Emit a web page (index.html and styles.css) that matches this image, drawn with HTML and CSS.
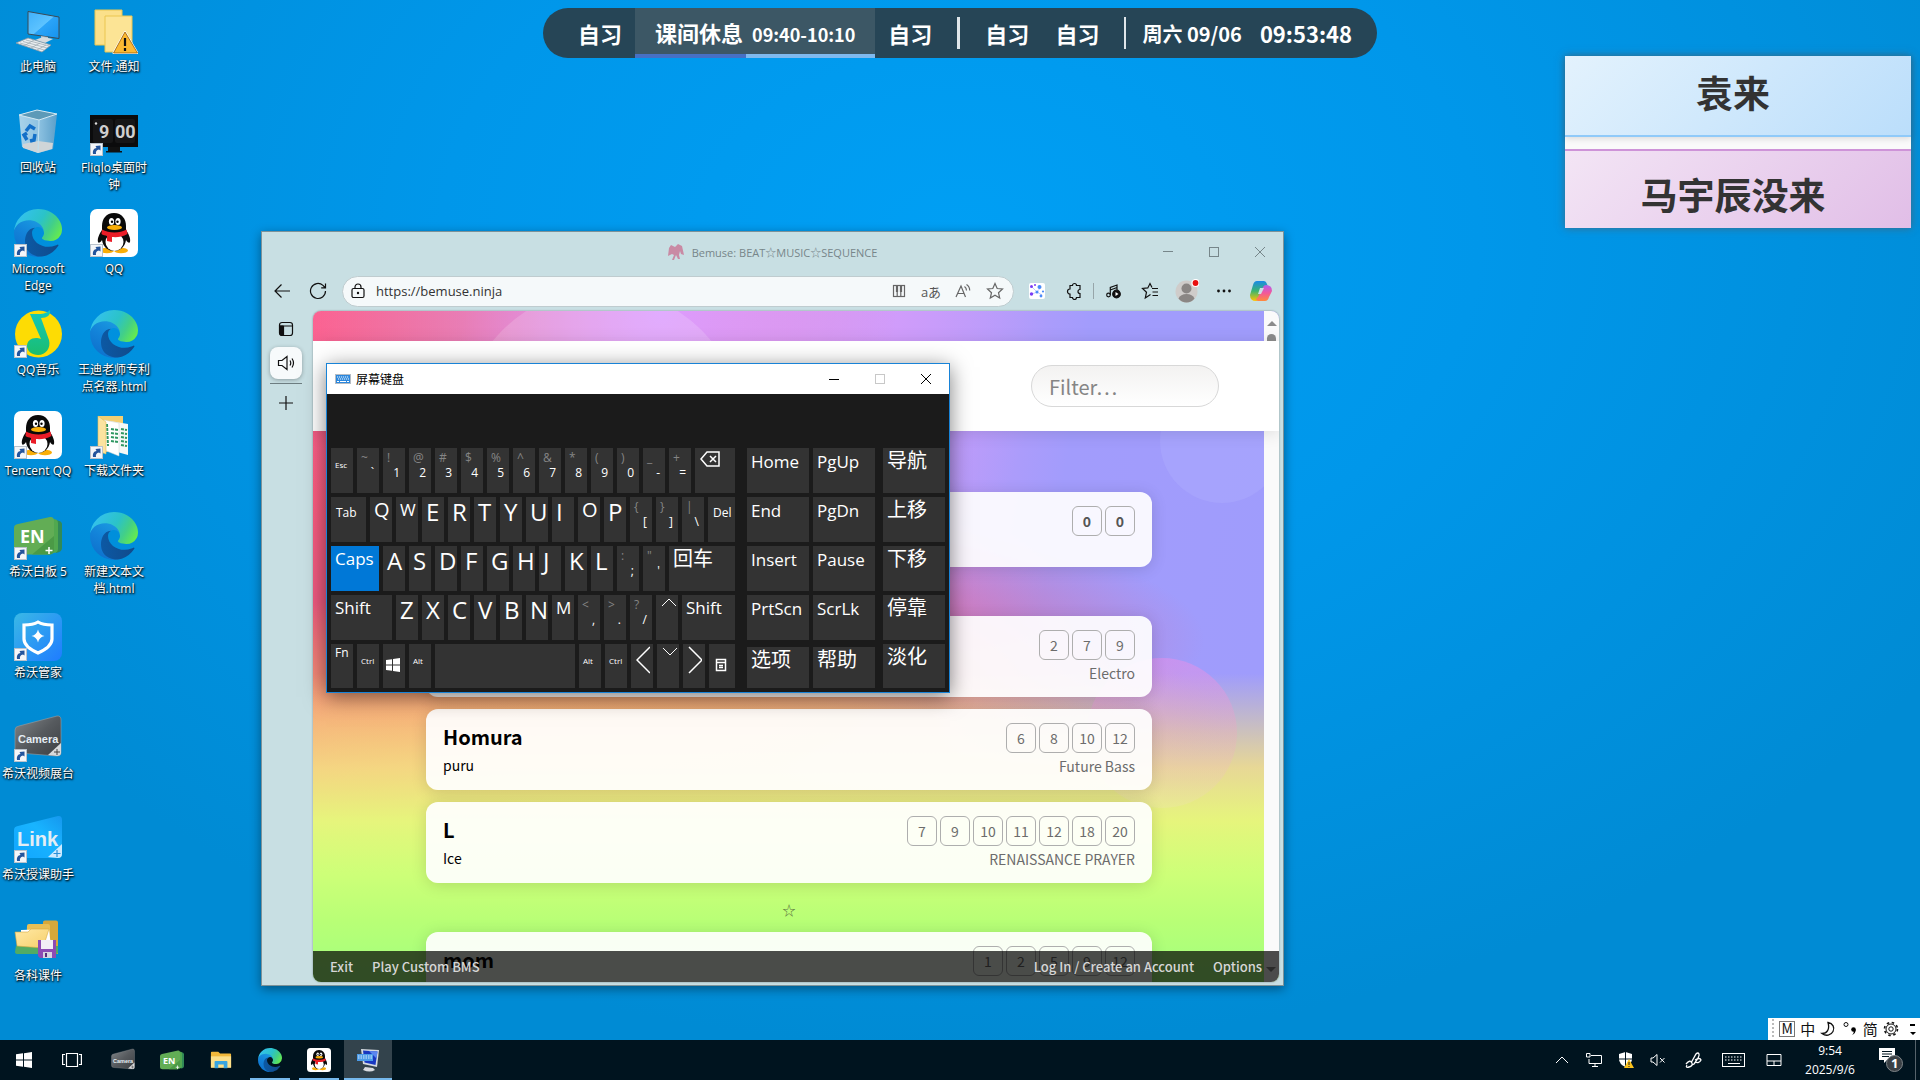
FILE: index.html
```html
<!DOCTYPE html>
<html lang="zh-CN">
<head>
<meta charset="utf-8">
<title>桌面</title>
<link rel="stylesheet" href="styles.css">
</head>
<body>
<svg class="defs" aria-hidden="true">
  <defs>
    <linearGradient id="edgeDark" x1="0" x2="1"><stop offset="0" stop-color="#0c59a4"/><stop offset="1" stop-color="#114a8b"/></linearGradient>
    <linearGradient id="edgeMid" x1=".8" y1="0" x2=".3" y2="1"><stop offset="0" stop-color="#1b9de2"/><stop offset=".5" stop-color="#1383d9"/><stop offset="1" stop-color="#0d70cc"/></linearGradient>
    <linearGradient id="edgeTop" x1="0" y1=".3" x2="1" y2=".7"><stop offset="0" stop-color="#35c1f1"/><stop offset=".5" stop-color="#2bc3c8"/><stop offset=".75" stop-color="#42cf88"/><stop offset="1" stop-color="#66eb4e"/></linearGradient>
    <linearGradient id="screen" x1="0" y1="0" x2="1" y2="1"><stop offset="0" stop-color="#3fb0fb"/><stop offset=".5" stop-color="#5dc3ff"/><stop offset=".52" stop-color="#2ba4f8"/><stop offset="1" stop-color="#1593ee"/></linearGradient>
    <linearGradient id="folder" x1="0" y1="0" x2="1" y2="1"><stop offset="0" stop-color="#ffe9a6"/><stop offset="1" stop-color="#f6cf6a"/></linearGradient>
    <linearGradient id="note" x1="0" y1="0" x2="0" y2="1"><stop offset="0" stop-color="#12c8bd"/><stop offset="1" stop-color="#1bbd6e"/></linearGradient>
    <linearGradient id="shield" x1="0" y1="0" x2="1" y2="1"><stop offset="0" stop-color="#3ab9e6"/><stop offset="1" stop-color="#1f7cff"/></linearGradient>
    <linearGradient id="camera" x1="0" y1="0" x2="1" y2="1"><stop offset="0" stop-color="#83878a"/><stop offset=".5" stop-color="#565a5e"/><stop offset="1" stop-color="#3c3f43"/></linearGradient>
    <linearGradient id="linkbg" x1="0" y1="1" x2="1" y2="0"><stop offset="0" stop-color="#12a5ff"/><stop offset=".6" stop-color="#18b4ff"/><stop offset="1" stop-color="#1697ee"/></linearGradient>
    <linearGradient id="copA" x1="0" y1="0" x2="0" y2="1"><stop offset="0" stop-color="#1a8ae8"/><stop offset=".5" stop-color="#3bb56e"/><stop offset="1" stop-color="#ffc400"/></linearGradient>
    <linearGradient id="copB" x1="0" y1="0" x2="0" y2="1"><stop offset="0" stop-color="#b45cf0"/><stop offset=".5" stop-color="#f2589a"/><stop offset="1" stop-color="#ff8a3c"/></linearGradient>
    <linearGradient id="bin" x1="0" y1="0" x2="1" y2="0"><stop offset="0" stop-color="#a9d3ea"/><stop offset=".5" stop-color="#8fc3e2"/><stop offset="1" stop-color="#5c9fc9"/></linearGradient>
  </defs>
  <symbol id="i-edge" viewBox="0 0 256 256">
    <path fill="url(#edgeMid)" d="M105.73 241.42A79.2 79.2 0 0 1 83 220.08a80.72 80.72 0 0 1 29.53-120c3.12-1.47 8.45-4.13 15.54-4a32.35 32.35 0 0 1 25.69 13 31.88 31.88 0 0 1 6.36 18.66c0-.21 24.46-79.6-80-79.6-43.9 0-80 41.66-80 78.21a130.15 130.15 0 0 0 12.11 56 128 128 0 0 0 156.38 67.11 75.55 75.55 0 0 1-62.78-8Z"/>
    <path fill="url(#edgeDark)" transform="translate(-4.63 -4.92)" d="M235.68 195.46a93.73 93.73 0 0 1-10.54 4.71 101.87 101.87 0 0 1-35.9 6.46c-47.32 0-88.54-32.55-88.54-74.32A31.48 31.48 0 0 1 117.13 105c-42.8 1.8-53.8 46.4-53.8 72.53 0 73.88 68.09 81.37 82.76 81.37 7.91 0 19.84-2.3 27-4.56l1.31-.44a128.34 128.34 0 0 0 66.6-52.8 4 4 0 0 0-5.32-5.64Z"/>
    <path fill="url(#edgeTop)" d="M152.33 148.86c-.81 1-3.3 2.5-3.3 5.66 0 2.61 1.7 5.12 4.72 7.23 14.38 10 41.49 8.68 41.56 8.68a59.56 59.56 0 0 0 30.27-8.35 61.38 61.38 0 0 0 30.43-52.88c.26-22.41-8-37.31-11.34-43.91C223.46 23.84 177.72 0 128 0A128 128 0 0 0 0 126.2c.48-36.54 36.8-66.05 80-66.05 3.5 0 23.46.34 42 10.07 16.34 8.58 24.9 18.94 30.85 29.21 6.18 10.67 7.28 24.15 7.28 29.52s-2.74 13.33-7.8 19.91Z"/>
  </symbol>
  <symbol id="i-qq" viewBox="0 0 48 48">
    <rect width="48" height="48" rx="7" fill="#fff"/>
    <ellipse cx="17" cy="41.500" rx="7" ry="2.800" fill="#f9ae08"/><ellipse cx="31" cy="41.500" rx="7" ry="2.800" fill="#f9ae08"/>
    <path d="M24 4c-8 0-12 6-12 13v4c-2 3-5 8-4 12 .5 1.500 2.500.5 4-2 1 7 6 11 12 11s11-4 12-11c1.500 2.500 3.500 3.500 4 2 1-4-2-9-4-12v-4c0-7-4-13-12-13z" fill="#0a0a0a"/>
    <ellipse cx="24.500" cy="33" rx="9" ry="9" fill="#fff"/>
    <ellipse cx="21.500" cy="12.500" rx="2.600" ry="3.600" fill="#fff"/><ellipse cx="28" cy="12.500" rx="2.600" ry="3.600" fill="#fff"/>
    <circle cx="22" cy="12.800" r="1.200"/><circle cx="27.500" cy="12.800" r="1.200"/>
    <ellipse cx="24.500" cy="18.500" rx="7.500" ry="2.400" fill="#f9ae08"/>
    <path d="M12 20.500c7 4 18 4 24.500 0l1 4.500c-5 3-11 3.500-15.500 3v5l-5-1v-5c-2-.5-4-1-5.500-2z" fill="#ea1c27"/>
  </symbol>
  <symbol id="i-arrow" viewBox="0 0 13 13">
    <rect x=".5" y=".5" width="12" height="12" fill="#f4f6f9" stroke="#b9c2cc"/>
    <path d="M3 11c-.5-4 1-5.500 3.500-6L5.500 3l5-.5v5L9 6.500C6.500 7 5.500 8.500 6 11z" fill="#24549c"/>
  </symbol>
  <symbol id="i-en" viewBox="0 0 48 48">
    <path d="M42 8q6 1 6 4v24q0 4-6 5z" fill="#318a56"/><path d="M39 7q5 0 5 4v26q0 4-5 4z" fill="#51a84f"/>
    <path d="M4 12 36 5q4-.5 4 4v29q0 4-4 4.500H5q-5 0-5-4V16q0-3.500 4-4z" fill="#62ad55"/>
    <path d="M18 42.500 40 24v14q0 4-4 4.500z" fill="#4b9a46"/>
    <path d="M35 35v7M31.500 38.500h7" stroke="#fff" stroke-width="1.500"/>
  </symbol>
  <symbol id="i-camera" viewBox="0 0 48 48">
    <path d="M5 12 43 2q4-.5 4 4v33q0 3-4 3L5 39q-4 0-4-4V16q0-3.500 4-4z" fill="url(#camera)" stroke="#9a9da0" stroke-width=".6"/>
    <path d="M34 41 47 29v10q0 3-4 3z" fill="#d8dadc"/><path d="M43 35v6M40 38h6" stroke="#444" stroke-width="1"/>
  </symbol>
  <symbol id="i-folder" viewBox="0 0 24 20">
    <path d="M1 2q0-1 1-1h7l2 2h11q1 0 1 1v14H1z" fill="#f3b93b"/><path d="M1 6h22v12.500H1z" fill="#fde08a"/>
    <path d="M5 19v-7q0-1 1-1h12q1 0 1 1v7h-4v-4H9v4z" fill="#38a5e0"/>
  </symbol>
</svg>

<main class="desktop">
  <ul class="icons">
    <li><button class="icon"><span class="pic"><svg viewBox="0 0 48 48"><path d="M14 4.500 45 10v21.500L14 27z" fill="url(#screen)" stroke="#3b4a55" stroke-width="1"/><path d="M27 29l7 1v4l-7-1z" fill="#b7c0c6"/><path d="M21 33l8-3 10 2-8 4z" fill="#d5dbdf"/><path d="M2 36l12-5 23 7-9 7z" fill="#e9edf0" stroke="#8b98a2" stroke-width=".8"/><path d="M6 36l24 7M9 34.500l24 6.500M12 33l23 6M10 39l10-6M17 41l9-5M23 43l9-5" stroke="#9aa6ae" stroke-width=".7"/></svg></span><span class="name">此电脑</span></button></li>
    <li><button class="icon"><span class="pic"><svg viewBox="0 0 48 48"><path d="M5 7 23 2l20 4-4 35-15 4-16-6z" fill="url(#bin)"/><path d="M5 7 23 2l20 4-18 6z" fill="#5d9ab8" stroke="#d4e9f3" stroke-width="1"/><path d="M9 36l15-3 15 2-1 6-14 4-15-5z" fill="#cfd5d8"/><path d="M25 12l-1 33" stroke="#bfe0f0"/><g fill="none" stroke="#1370c8" stroke-width="3.500"><path d="M12 23l4-5 5 3"/><path d="M21 26l-1 6-4 1"/><path d="M13 32l-3-5 3-2"/></g></svg></span><span class="name">回收站</span></button></li>
    <li><button class="icon"><span class="pic"><svg><use href="#i-edge"/></svg><svg class="lnk"><use href="#i-arrow"/></svg></span><span class="name">Microsoft Edge</span></button></li>
    <li><button class="icon"><span class="pic"><svg viewBox="0 0 48 48"><circle cx="24.500" cy="24" r="23.500" fill="#fddc04"/><path d="M16 4c8 0 15 1 20-4 1 5-3 8-9 8l8 22c2 8-3 15-11 15-6 0-11-4-11-9s4-8 9-8c2 0 3 0 5 1z" fill="url(#note)"/></svg><svg class="lnk"><use href="#i-arrow"/></svg></span><span class="name">QQ音乐</span></button></li>
    <li><button class="icon"><span class="pic"><svg><use href="#i-qq"/></svg><svg class="lnk"><use href="#i-arrow"/></svg></span><span class="name">Tencent QQ</span></button></li>
    <li><button class="icon"><span class="pic"><svg viewBox="0 0 48 48"><use href="#i-en"/><text x="6" y="31" font-size="18" class="logo-text">EN</text></svg><svg class="lnk"><use href="#i-arrow"/></svg></span><span class="name">希沃白板 5</span></button></li>
    <li><button class="icon"><span class="pic"><svg viewBox="0 0 48 48"><rect width="48" height="48" rx="8" fill="url(#shield)"/><path d="M24 9c5 3 9 3 14 3v14c0 6-5 10-14 14-9-4-14-8-14-14V12c5 0 9 0 14-3z" fill="none" stroke="#fff" stroke-width="3.200"/><path d="M24 16.500q1.200 5.300 6.500 6.500-5.300 1.200-6.500 6.500-1.200-5.300-6.500-6.500 5.300-1.200 6.500-6.500z" fill="#fff"/></svg><svg class="lnk"><use href="#i-arrow"/></svg></span><span class="name">希沃管家</span></button></li>
    <li><button class="icon"><span class="pic"><svg viewBox="0 0 48 48"><use href="#i-camera"/><text x="4" y="29" font-size="11" class="logo-thin">Camera</text></svg><svg class="lnk"><use href="#i-arrow"/></svg></span><span class="name">希沃视频展台</span></button></li>
    <li><button class="icon"><span class="pic"><svg viewBox="0 0 48 48"><path d="M4 11 44 1q4-.5 4 4v33q0 5-4 5H4q-4 0-4-4V15q0-3.500 4-4z" fill="url(#linkbg)"/><path d="M34 42 48 29v10q0 4-4 4z" fill="#cdeaff"/><path d="M43 35v7M39.500 38.500h7" stroke="#2b8fd8" stroke-width="1.200"/><text x="3" y="31" font-size="20" class="logo-thin">Link</text></svg><svg class="lnk"><use href="#i-arrow"/></svg></span><span class="name">希沃授课助手</span></button></li>
    <li><button class="icon"><span class="pic"><svg viewBox="0 0 48 48"><path d="M29 6q0-1.500 2-1.500h11q2 0 2 2V38H28z" fill="#d7a83a"/><path d="M13 10q0-2 2-2h19q2 0 2 2v27H12z" fill="#e8bf55"/><path d="M7 14l28-1 2 18H7z" fill="#fff"/><path d="M2 30h42v6q0 2-3 2H4q-3 0-3-2z" fill="#52ab63"/><path d="M1 16h13l3-3h18l-6 19L3 30z" fill="url(#folder)" stroke="#d6a93f" stroke-width=".6"/><path d="M24 24h18v18H26l-2-2z" fill="#8d4bb4"/><path d="M27 24h12v9H27z" fill="#f2eef6"/><path d="M29 36h9v6h-9z" fill="#d9d3e0"/><path d="M31 37h2v4h-2z" fill="#5b2f7c"/></svg></span><span class="name">各科课件</span></button></li>
    <li><button class="icon"><span class="pic"><svg viewBox="0 0 48 48"><path d="M5 3h27v35H5z" fill="#fbe08a" stroke="#eac650"/><path d="M15 9h27v36H15z" fill="#fce495" stroke="#eac650"/><path d="M35 25 23.500 46h24z" fill="#f8b32c" stroke="#fff" stroke-width="2" stroke-linejoin="round"/><path d="M35 25 23.500 46h24z" fill="#fbb933" stroke="#9a5b00" stroke-width=".8" stroke-linejoin="round"/><path d="M35 31v8M35 41v3" stroke="#111" stroke-width="2.200"/></svg></span><span class="name">文件,通知</span></button></li>
    <li><button class="icon"><span class="pic"><svg viewBox="0 0 48 48"><path d="M0 7h48v32H0z" fill="#0b0b0c"/><path d="M18 39h12v4H18zM16 43h16v1.500H16z" fill="#111"/><rect x="3" y="11" width="20" height="24" rx="2" fill="#161617"/><rect x="25" y="11" width="20" height="24" rx="2" fill="#161617"/><text x="9" y="30" font-size="18" class="logo-clock">9</text><text x="25" y="30" font-size="18" class="logo-clock">00</text><circle cx="6" cy="15.500" r="1.200" fill="#ddd"/></svg><svg class="lnk"><use href="#i-arrow"/></svg></span><span class="name">Fliqlo桌面时钟</span></button></li>
    <li><button class="icon"><span class="pic"><svg><use href="#i-qq"/></svg><svg class="lnk"><use href="#i-arrow"/></svg></span><span class="name">QQ</span></button></li>
    <li><button class="icon"><span class="pic"><svg><use href="#i-edge"/></svg></span><span class="name">王迪老师专利点名器.html</span></button></li>
    <li><button class="icon"><span class="pic"><svg viewBox="0 0 48 48"><path d="M8 5h25v30l-22 8-3-3z" fill="#f3cf72"/><path d="M20 10l18 3v31l-18-5z" fill="#f4f8f6"/><path d="M14 9l15 3v33l-15-6z" fill="#fff" stroke="#ccd4d0" stroke-width=".5"/><path d="M17 13l1 22M21 18l7 1M21 22l7 1M21 26l7 1M21 30l7 1M31 18l6 1M31 22l6 1M31 26l6 1M31 30l6 1M31 34l6 1" stroke="#2f9762" stroke-width="2" stroke-dasharray="3 1"/><path d="M8 5l8 6v32l-8-3z" fill="#fbe3a0" stroke="#e4bd57" stroke-width=".6"/></svg><svg class="lnk"><use href="#i-arrow"/></svg></span><span class="name">下载文件夹</span></button></li>
    <li><button class="icon"><span class="pic"><svg><use href="#i-edge"/></svg></span><span class="name">新建文本文档.html</span></button></li>
  </ul>

  <section class="schedule" aria-label="课程表">
    <span class="lesson">自习</span>
    <span class="lesson current">课间休息 <small>09:40-10:10</small><i class="elapsed"></i></span>
    <span class="lesson">自习</span>
    <i class="bar"></i>
    <span class="lesson">自习</span>
    <span class="lesson">自习</span>
    <i class="bar thin"></i>
    <span class="date">周六 09/06</span>
    <time class="now">09:53:48</time>
  </section>

  <section class="notes" aria-label="便签">
    <p class="note blue">袁来</p>
    <p class="note pink">马宇辰没来</p>
  </section>

  <section class="browser" aria-label="Bemuse">
    <header class="titlebar">
      <h1 class="title"><svg class="i16" viewBox="0 0 16 16"><path d="M3 1l4 2 3-3 4 2 2 9-3-1-1-3-1 4 1 4h-2l-2-4-2 5H4l2-5-2-1-2 1-2 1 1-8z" fill="#c98aa4"/></svg>Bemuse: BEAT☆MUSIC☆SEQUENCE</h1>
      <div class="controls">
        <button aria-label="最小化"><svg class="i12" viewBox="0 0 12 12"><path d="M1 5.500h10"/></svg></button>
        <button aria-label="最大化"><svg class="i12" viewBox="0 0 12 12"><rect x="1.500" y="1.500" width="9" height="9"/></svg></button>
        <button aria-label="关闭"><svg class="i12" viewBox="0 0 12 12"><path d="M1 1l10 10M11 1 1 11"/></svg></button>
      </div>
    </header>
    <div class="toolbar">
      <button class="tool" aria-label="返回"><svg class="i18" viewBox="0 0 18 18"><path d="M17 9H2M8.500 2.500 2 9l6.500 6.500"/></svg></button>
      <button class="tool" aria-label="刷新"><svg class="i18" viewBox="0 0 18 18"><path d="M16.500 9A7.500 7.500 0 1 1 14 3.400L16 5.500M16.500 1.500v4.300h-4.300"/></svg></button>
      <div class="address">
        <svg class="i16" viewBox="0 0 16 16"><rect x="2" y="5.500" width="12" height="9" rx="1.500"/><path d="M5 5.500V4a3 3 0 0 1 6 0v1.500"/><circle cx="8" cy="10" r=".6" fill="#333"/></svg>
        <input type="text" aria-label="地址" value="https://bemuse.ninja">
        <button class="tool s" aria-label="钢琴"><svg class="i16" viewBox="0 0 16 16"><rect x="2.500" y="2.500" width="11" height="11"/><path d="M6.200 9v4.500M9.800 9v4.500"/><path d="M6 3v6M10 3v6" stroke-width="2.200"/></svg></button>
        <button class="tool s" aria-label="翻译"><span class="glyph">aあ</span></button>
        <button class="tool s" aria-label="朗读"><svg class="i16" viewBox="0 0 16 16"><path d="M1 14 6 3l4.500 11M2.700 10.500h6.400M9.500 3.500q2 1.500 2 4M11.500 1.500q3.200 2 3.200 6"/></svg></button>
        <button class="tool s" aria-label="收藏"><svg class="i18" viewBox="0 0 18 18"><path d="m9 1.500 2.200 5 5.300.5-4 3.700 1.200 5.300L9 13.300 4.300 16l1.200-5.300-4-3.700 5.300-.5z"/></svg></button>
      </div>
      <div class="actions">
        <button class="tool" aria-label="扩展图"><svg class="i16" viewBox="0 0 16 16" stroke="none"><rect width="16" height="16" rx="2" fill="#fff"/><path d="M3 4l5 5 4-5M3 11l5-2 5 3" stroke="#a8b4ff" fill="none" stroke-width=".7"/><g fill="#7a3cf5"><circle cx="2.500" cy="3.500" r="1.500"/><circle cx="2.500" cy="11" r="1.700"/><circle cx="6" cy="2" r="1"/></g><g fill="#4a8bf8"><circle cx="10.500" cy="4" r="2"/><circle cx="8" cy="9" r="1.500"/><circle cx="12" cy="13" r="1.400"/><circle cx="14" cy="8.500" r="1.100"/></g></svg></button>
        <button class="tool" aria-label="扩展"><svg class="i18" viewBox="0 0 18 18"><path d="M5 3.500h2.500a2 2 0 0 1 4 0H15v4a2 2 0 0 0 0 4v4h-3.500a2 2 0 0 1-4 0H5v-3.500a2.500 2.500 0 0 1 0-5z"/></svg></button>
        <i class="sep"></i>
        <button class="tool" aria-label="媒体"><svg class="i16" viewBox="0 0 16 16"><circle cx="3.500" cy="12" r="1.800"/><path d="M5.300 12V4.500L12 2v5M5.300 7 12 4.500"/><circle cx="11.500" cy="11" r="3.800" fill="#111"/><path d="m10.500 9 3 2-3 2z" fill="#fff" stroke="none"/></svg></button>
        <button class="tool" aria-label="收藏夹"><svg class="i18" viewBox="0 0 18 18"><path d="M9.500 12.500 4.300 16l1.200-5.800L1.500 6.500l5.300-.6L9 1.500l2 4M11 6.500h6M11.500 10h5.500M11.500 13.500h5.500"/></svg></button>
        <button class="tool" aria-label="个人资料"><svg class="i24" viewBox="0 0 24 24" stroke="none"><circle cx="11.500" cy="12.500" r="11" fill="#cfccca"/><circle cx="11.500" cy="9.500" r="5" fill="#8a8684"/><path d="M3.500 19.500q2-4.500 8-4.500t8 4.500q-3 4-8 4t-8-4z" fill="#8a8684"/><circle cx="20.500" cy="4" r="3.500" fill="#e81010" stroke="#fff"/></svg></button>
        <button class="tool" aria-label="设置"><svg class="i16" viewBox="0 0 16 16" stroke="none"><g fill="#111"><circle cx="2.500" cy="8" r="1.400"/><circle cx="8" cy="8" r="1.400"/><circle cx="13.500" cy="8" r="1.400"/></g></svg></button>
        <button class="tool" aria-label="Copilot"><svg class="i24" viewBox="0 0 24 24" stroke="none"><path d="M8 2h7q2 0 3 3l1 3h-4l-5 12q-1 2-3 2-6 0-6-6L4 6q1-4 4-4z" fill="url(#copA)"/><path d="M16 22H9q-2 0-2-2l2-2 5-10q1-2 3-2 6 0 6 6l-3 6q-1 4-4 4z" fill="url(#copB)"/><path d="M11 9h4l-3 6H9z" fill="#c9e0e4"/></svg></button>
      </div>
    </div>
    <div class="body">
      <nav class="tabs" aria-label="标签页">
        <button class="tab" aria-label="标签操作"><svg class="i16" viewBox="0 0 16 16"><rect x="1.500" y="1.500" width="13" height="13" rx="2.500"/><path d="M1.500 5h13M5.500 5v9.500"/><path d="M2 5h3v9H3L2 13z" fill="#111"/></svg></button>
        <button class="tab on" aria-label="Bemuse"><svg class="i18" viewBox="0 0 18 18"><path d="M1.500 6.500v5h3.500l5 4v-13l-5 4zM13 6.500q1.500 2.500 0 5M15 4.500q3 4.500 0 9"/></svg></button>
        <button class="tab" aria-label="新建标签页"><svg class="i16" viewBox="0 0 16 16"><path d="M8 1v14M1 8h14"/></svg></button>
      </nav>
      <div class="page" lang="en">
        <i class="bubble b1"></i><i class="bubble b2"></i><i class="bubble b3"></i>
        <div class="scroll"><i class="up"></i><i class="thumb"></i></div>
        <div class="filterbar"><input type="text" placeholder="Filter…" aria-label="Filter"></div>
        <ul class="songs">
          <li class="song short"><div class="info"></div><div class="meta"><div class="levels"><b>0</b><b>0</b></div></div></li>
          <li class="star">☆</li>
          <li class="song"><div class="info"></div><div class="meta"><div class="levels"><span>2</span><span>7</span><span>9</span></div><p>Electro</p></div></li>
          <li class="song"><div class="info"><h2>Homura</h2><p>puru</p></div><div class="meta"><div class="levels"><span>6</span><span>8</span><span>10</span><span>12</span></div><p>Future Bass</p></div></li>
          <li class="song"><div class="info"><h2>L</h2><p>Ice</p></div><div class="meta"><div class="levels"><span>7</span><span>9</span><span>10</span><span>11</span><span>12</span><span>18</span><span>20</span></div><p>RENAISSANCE PRAYER</p></div></li>
          <li class="star">☆</li>
          <li class="song"><div class="info"><h2>mom</h2></div><div class="meta"><div class="levels"><span>1</span><span>2</span><span>5</span><span>9</span><span>12</span></div></div></li>
        </ul>
        <footer class="menu">
          <a href="#">Exit</a><a href="#">Play Custom BMS</a>
          <a href="#" class="push">Log In / Create an Account</a><a href="#">Options</a><i class="down"></i>
        </footer>
      </div>
    </div>
  </section>

  <section class="osk" aria-label="屏幕键盘">
    <header class="osk-title">
      <svg viewBox="0 0 16 10"><rect x=".5" y=".5" width="15" height="9" fill="#2b87dd" stroke="#b5bcc4"/><path d="M2 3h12M3 5h11" stroke="#fff" stroke-dasharray="1.200 .8"/><path d="M2 7.500h2M5 7.500h6M12 7.500h2" stroke="#fff"/></svg>
      <h2>屏幕键盘</h2>
      <div class="controls">
        <button aria-label="最小化"><svg class="i12" viewBox="0 0 12 12"><path d="M1 6.500h10"/></svg></button>
        <button aria-label="最大化" disabled><svg class="i12" viewBox="0 0 12 12"><rect x="1.500" y="1.500" width="9" height="9"/></svg></button>
        <button aria-label="关闭"><svg class="i12" viewBox="0 0 12 12"><path d="M1 1l10 10M11 1 1 11"/></svg></button>
      </div>
    </header>
    <div class="keys">
      <div class="block main">
        <div class="row">
          <button class="k xs">Esc</button><button class="k two"><i>~</i><b>`</b></button><button class="k two"><i>!</i><b>1</b></button><button class="k two"><i>@</i><b>2</b></button><button class="k two"><i>#</i><b>3</b></button><button class="k two"><i>$</i><b>4</b></button><button class="k two"><i>%</i><b>5</b></button><button class="k two"><i>^</i><b>6</b></button><button class="k two"><i>&amp;</i><b>7</b></button><button class="k two"><i>*</i><b>8</b></button><button class="k two"><i>(</i><b>9</b></button><button class="k two"><i>)</i><b>0</b></button><button class="k two"><i>_</i><b>-</b></button><button class="k two"><i>+</i><b>=</b></button><button class="k w40" aria-label="退格"><svg width="20" height="18" viewBox="0 0 20 18"><path d="M7 2h12v14H7L1 9zM10 6l6 6M16 6l-6 6" stroke-width="1.500"/></svg></button>
        </div>
        <div class="row">
          <button class="k s w35">Tab</button><button class="k l">Q</button><button class="k m">W</button><button class="k">E</button><button class="k">R</button><button class="k">T</button><button class="k">Y</button><button class="k">U</button><button class="k">I</button><button class="k l">O</button><button class="k">P</button><button class="k two"><i>{</i><b>[</b></button><button class="k two"><i>}</i><b>]</b></button><button class="k two"><i>|</i><b>\</b></button><button class="k s w27">Del</button>
        </div>
        <div class="row">
          <button class="k m w48 on">Caps</button><button class="k">A</button><button class="k">S</button><button class="k">D</button><button class="k">F</button><button class="k">G</button><button class="k">H</button><button class="k">J</button><button class="k">K</button><button class="k">L</button><button class="k two"><i>:</i><b>;</b></button><button class="k two"><i>"</i><b>'</b></button><button class="k l w66">回车</button>
        </div>
        <div class="row">
          <button class="k m w61">Shift</button><button class="k">Z</button><button class="k">X</button><button class="k">C</button><button class="k">V</button><button class="k">B</button><button class="k">N</button><button class="k m">M</button><button class="k two"><i>&lt;</i><b>,</b></button><button class="k two"><i>&gt;</i><b>.</b></button><button class="k two"><i>?</i><b>/</b></button><button class="k" aria-label="上"><svg width="16" height="12" viewBox="0 0 16 12"><path d="M1 9l7-7 7 7"/></svg></button><button class="k m w53">Shift</button>
        </div>
        <div class="row">
          <button class="k fn">Fn</button><button class="k xs">Ctrl</button><button class="k low" aria-label="Windows"><svg width="14" height="14" viewBox="0 0 14 14" stroke="none" fill="#fff"><path d="M0 2l6-.8v5.300H0zM7 1l7-1v6.500H7zM0 7.500h6v5.300L0 12zM7 7.500h7V14l-7-1z"/></svg></button><button class="k xs">Alt</button><button class="k w140" aria-label="空格"></button><button class="k xs">Alt</button><button class="k xs">Ctrl</button><button class="k" aria-label="左"><svg width="14" height="28" viewBox="0 0 14 28"><path d="M14 1 1 14l13 13" stroke-width="1.500"/></svg></button><button class="k" aria-label="下"><svg width="16" height="12" viewBox="0 0 16 12"><path d="M1 2l7 7 7-7"/></svg></button><button class="k" aria-label="右"><svg width="14" height="28" viewBox="0 0 14 28"><path d="M1 1l13 13L1 27" stroke-width="1.500"/></svg></button><button class="k low w26" aria-label="菜单"><svg width="12" height="14" viewBox="0 0 12 14"><path d="M1.500 1.500h9v11h-9zM1.500 4.500h9M4 7.500h4M4 9.500h4" stroke-width="1.500"/></svg></button>
        </div>
      </div>
      <div class="block nav">
        <div class="row"><button class="k n">Home</button><button class="k n">PgUp</button></div>
        <div class="row"><button class="k n">End</button><button class="k n">PgDn</button></div>
        <div class="row"><button class="k n">Insert</button><button class="k n">Pause</button></div>
        <div class="row"><button class="k n">PrtScn</button><button class="k n">ScrLk</button></div>
        <div class="row inset"><button class="k l">选项</button><button class="k l">帮助</button></div>
      </div>
      <div class="block side">
        <div class="row"><button class="k l">导航</button></div>
        <div class="row"><button class="k l">上移</button></div>
        <div class="row"><button class="k l">下移</button></div>
        <div class="row"><button class="k l">停靠</button></div>
        <div class="row"><button class="k l">淡化</button></div>
      </div>
    </div>
  </section>

  <section class="ime" aria-label="输入法">
    <i class="grip"></i><span class="box">M</span><span>中</span>
    <svg class="i16" viewBox="0 0 16 16"><path d="M8 1.500c5 1 7 5 5 9s-7 5-11 2c5 0 8-4 6-11z" fill="none" stroke="#111" stroke-width="1.300"/></svg>
    <svg class="i16" viewBox="0 0 16 16"><circle cx="4" cy="3.500" r="2" fill="none" stroke="#111"/><circle cx="11.500" cy="8.500" r="2.300"/><path d="M13.700 8.500q0 4-3.500 5.500 2-2 1.500-4z"/></svg>
    <span>简</span>
    <svg class="i16" viewBox="0 0 16 16" fill="none" stroke="#111"><circle cx="8" cy="8" r="2.200"/><circle cx="8" cy="8" r="5"/><circle cx="8" cy="8" r="6.500" stroke-width="1.600" stroke-dasharray="2.500 2.600"/></svg>
    <svg class="opts" viewBox="0 0 6 16"><path d="M0 3h5v2H0zM0 11h6l-3 3z"/></svg>
  </section>

  <footer class="taskbar">
    <div class="apps">
      <button class="app" aria-label="开始"><svg class="i16" viewBox="0 0 16 16" fill="#fff"><path d="M0 2.300 7 1.300v6.200H0zM8 1.200 16 0v7.500H8zM0 8.500h7v6.200l-7-1zM8 8.500h8V16l-8-1.200z"/></svg></button>
      <button class="app" aria-label="任务视图"><svg width="20" height="16" viewBox="0 0 20 16" fill="none" stroke="#fff" stroke-width="1.200"><path d="M4.500 1.500h11v13h-11zM3 2.500H.6v10H3M17 2.500h2.400v10H17"/></svg></button>
      <button class="app gap" aria-label="希沃视频展台"><svg class="i24" viewBox="0 0 48 48"><use href="#i-camera"/><text x="4" y="29" font-size="11" class="logo-thin">Camera</text></svg></button>
      <button class="app" aria-label="希沃白板"><svg class="i24" viewBox="0 0 48 48"><use href="#i-en"/><text x="6" y="31" font-size="18" class="logo-text">EN</text></svg></button>
      <button class="app" aria-label="文件资源管理器"><svg width="22" height="20"><use href="#i-folder"/></svg></button>
      <button class="app run" aria-label="Edge"><svg class="i24"><use href="#i-edge"/></svg></button>
      <button class="app run" aria-label="QQ"><svg class="i24"><use href="#i-qq"/></svg></button>
      <button class="app run active" aria-label="屏幕键盘"><svg class="i24" viewBox="0 0 24 24"><path d="M5 1l18 1-2 17-14-3z" fill="#d4d9e0"/><path d="M7 2.500l14.500 1-2 13.500-11-2.500z" fill="#1838c0"/><path d="M13 3l8.500.5-1 7z" fill="#5a86f0"/><path d="M9 19l8 1 2 2q-5 3-12 0z" fill="#d8dbe0"/><path d="M1 6h16v7H1z" fill="#4b9be8"/><path d="M2 8h14M2 10h14" stroke="#d8ecff" stroke-dasharray="1.500 1"/></svg></button>
    </div>
    <div class="tray">
      <button aria-label="隐藏的图标"><svg class="i16" viewBox="0 0 16 16"><path d="M2 11l6-6 6 6"/></svg></button>
      <button aria-label="网络"><svg class="i16" viewBox="0 0 16 16"><path d="M5 3.500h10.500v8H3V7M6 14.500h6M9 11.500v3M.5 1.500H4V5H.5z"/></svg></button>
      <button aria-label="安全"><svg class="i16" viewBox="0 0 16 16" stroke="none"><path d="M7.500 0 14 2v5q0 5-6.500 8Q1 12 1 7V2z" fill="#fff"/><path d="M7.500 0v15M1 7h13" stroke="#00141f"/><path d="M11 7l5 9H6z" fill="#fbc21c"/><path d="M11 10v3M11 14v1" stroke="#222"/></svg></button>
      <button aria-label="音量"><svg class="i16" viewBox="0 0 16 16"><path d="M1 6v4h2l4 3.500v-11L3 6zM10 6l4.500 4.500M14.500 6 10 10.500"/></svg></button>
      <button class="wide" aria-label="墨迹"><svg class="i18" viewBox="0 0 18 18"><path d="M1 13q4-5 6-1 1 3-3 4t-2-2M6 12l5-9q2-2 3 0t-5 10l-2 1M10 9q5-3 6 0-2 4-6 2" stroke-width="1.300"/></svg></button>
      <button class="wide" aria-label="触摸键盘"><svg width="24" height="14" viewBox="0 0 24 14"><rect x=".5" y=".5" width="22" height="13"/><path d="M3 4h18M3 7h18" stroke-dasharray="1.500 1.500"/><path d="M6 10.500h12"/></svg></button>
      <button class="wide" aria-label="触摸板"><svg class="i16" viewBox="0 0 16 16"><path d="M1 2.500h14v11H1zM1 9h14M8 9v4.500"/></svg></button>
      <time class="clock">9:54<br>2025/9/6</time>
      <button class="notif" aria-label="通知"><svg width="24" height="24" viewBox="0 0 24 24" stroke="none"><path d="M0 0h16v12H8l-3 3v-3H0z" fill="#fff"/><path d="M3 3.500h10M3 6h10M3 8.500h7" stroke="#00141f"/><circle cx="15.500" cy="15.500" r="8" fill="#3a4045" stroke="#80868a"/><text x="12" y="20" font-size="13" class="logo-text">1</text></svg></button>
      <i class="edge"></i>
    </div>
  </footer>
</main>
</body>
</html>
```
FILE: styles.css
```css
* { box-sizing: border-box; }
body, h1, h2, p, ul { margin: 0; padding: 0; }
ul { list-style: none; }
i, b { font-style: normal; }
body { font-family: "Open Sans", "Noto Sans CJK SC", sans-serif; font-size: 12px; }
button { border: 0; padding: 0; background: none; color: inherit; font: inherit; display: flex; align-items: center; justify-content: center; }
svg { display: block; flex: none; }
.defs { position: absolute; width: 0; height: 0; }
.logo-text { fill: #fff; font-family: "Open Sans", sans-serif; font-weight: 700; }
.logo-thin { fill: #e4edf4; font-family: "Liberation Sans", sans-serif; font-weight: 700; }
.logo-clock { fill: #cfcfcf; font-family: "Roboto", sans-serif; font-weight: 700; }
.i12 { width: 12px; height: 12px; }
.i16 { width: 16px; height: 16px; }
.i18 { width: 18px; height: 18px; }
.i24 { width: 24px; height: 24px; }

.desktop {
  position: relative; height: 100vh; overflow: hidden;
  display: flex; flex-direction: column; justify-content: space-between;
  background: radial-gradient(ellipse 60% 75% at 50% 22%, #009ff4 0%, #0097ea 45%, #008bd4 100%);
}

/* desktop icons */
.icons { display: grid; grid-auto-flow: column; grid-template-rows: repeat(10, 101px); grid-auto-columns: 76px; justify-content: start; padding-top: 7px; }
.icon { flex-direction: column; width: 76px; gap: 3px; }
.pic { position: relative; width: 48px; height: 48px; }
.pic svg { width: 48px; height: 48px; }
.pic .lnk { position: absolute; left: 0; bottom: 0; width: 13px; height: 13px; }
.name { width: 74px; color: #fff; line-height: 17px; text-align: center; text-shadow: 1px 1px 2px #000, 0 1px 2px rgba(0,0,0,.8); }

/* timetable strip */
.schedule {
  position: absolute; top: 8px; left: 50%; transform: translateX(-50%); height: 50px; width: 834px;
  display: flex; align-items: center; padding-left: 22px; overflow: hidden; white-space: nowrap;
  border-radius: 25px; background: #264556; color: #fff;
  font-family: "Noto Sans CJK SC", sans-serif; font-size: 22px; font-weight: 700;
}
.lesson { padding: 0 13px; line-height: 50px; }
.current { position: relative; padding: 0 20px; background: #3c5765; }
.current small { margin-left: 4px; font-size: 18px; }
.current::after, .elapsed { content: ""; position: absolute; left: 0; bottom: 0; width: 100%; height: 5px; background: #7fb9ee; }
.elapsed { width: 46%; background: #4670c4; z-index: 1; }
.bar { width: 3px; height: 32px; margin: 0 12px; background: #dfe6ea; }
.thin { width: 2px; }
.date { font-size: 20px; margin-left: 4px; }
.now { margin-left: 18px; }

/* sticky notes */
.notes { position: absolute; top: 56px; right: 9px; width: 346px; display: flex; flex-direction: column; gap: 12px; background: #fafafa; box-shadow: 0 0 8px rgba(90,90,90,.7); }
.note { padding-right: 10px; text-align: center; color: #333; font: 700 37px/78px "Noto Sans CJK SC", sans-serif; }
.blue { height: 81px; line-height: 72px; background: linear-gradient(135deg, #e3f2fd, #bbdefb); border-bottom: 2px solid #90caf9; box-shadow: 0 2px 6px rgba(0,0,0,.12); }
.pink { height: 79px; line-height: 86px; overflow: hidden; background: linear-gradient(135deg, #f3e5f5, #e1bee7); border-top: 2px solid #ce93d8; }

/* browser window */
.browser {
  position: absolute; left: 261px; top: 231px; width: 1023px; height: 755px;
  display: flex; flex-direction: column; padding: 0 4px 3px 0;
  background: #c8dfe3; border: 1px solid #7d9298; box-shadow: 0 3px 10px rgba(0,0,0,.4);
}
.titlebar { display: grid; grid-template-columns: 1fr auto 1fr; height: 40px; margin-right: -4px; color: #77868a; }
.title { grid-column: 2; display: flex; align-items: center; gap: 8px; font-size: 11px; font-weight: 400; font-family: "Open Sans", "Noto Sans CJK SC", sans-serif; }
.controls { display: flex; justify-content: flex-end; }
.controls button { width: 46px; }
.controls svg { fill: none; stroke: currentColor; stroke-width: 1; }
.toolbar { display: flex; align-items: center; height: 38px; margin: 0 -4px 1px 0; flex: none; padding-left: 2px; }
.tool { width: 36px; height: 32px; flex: none; color: #111; }
.tool svg, .address > svg { fill: none; stroke: #111; stroke-width: 1.2; }
.tool.s { width: 32px; color: #555; }
.tool.s svg { stroke: #666; }
.tool svg[stroke="none"] { stroke: none; }
.glyph { font-size: 13px; font-family: "Open Sans", "Noto Sans CJK JP", sans-serif; }
.address { flex: 1; display: flex; align-items: center; height: 31px; margin-left: 6px; padding: 0 2px 0 7px; border: 1px solid #bfcccf; border-radius: 16px; background: #f5f9fa; }
.address input { flex: 1; min-width: 0; border: 0; padding: 0 0 0 10px; background: none; color: #333; font: 13px "Open Sans", sans-serif; }
.actions { display: flex; align-items: center; gap: 1px; padding: 0 4px 0 5px; }
.sep { width: 1px; height: 16px; background: #97a5a9; }
.body { flex: 1; min-height: 0; display: flex; }
.tabs { width: 51px; display: flex; flex-direction: column; align-items: center; padding: 2px 4px 0 0; }
.tab { width: 32px; height: 32px; }
.tab svg { fill: none; stroke: #111; stroke-width: 1.2; }
.tab.on { position: relative; margin: 2px 0 8px; border-radius: 8px; background: #f7fafb; box-shadow: 0 1px 4px rgba(0,0,0,.3); }
.tab.on::after { content: ""; position: absolute; left: 0; right: 0; bottom: -5px; height: 1px; background: #6d7d81; }

/* game page */
.page {
  position: relative; flex: 1; overflow: hidden; border-radius: 8px; padding-top: 30px;
  font-family: "Noto Sans CJK KR", sans-serif; font-size: 14px;
  background:
    linear-gradient(180deg, rgba(240,215,140,0) 54%, rgba(244,226,132,.85) 68%, #e6f57c 76%, #cdff78 84%, #b8ff76 91%, #a6ff7c 98%),
    radial-gradient(ellipse 640px 130px at 28% 61%, rgba(252,160,112,.95) 0%, rgba(248,165,115,.8) 40%, rgba(246,165,115,0) 100%),
    radial-gradient(ellipse 660px 150px at 24% 49%, rgba(240,84,120,.95) 0%, rgba(236,90,130,.75) 45%, rgba(236,110,170,0) 100%),
    radial-gradient(ellipse 40% 60% at 36% 0%, #dc9cff 0%, rgba(216,156,255,0) 100%),
    linear-gradient(100deg, #ff5c86 0%, #f46070 14%, #e887b0 32%, #c89cf8 54%, #a29cfc 72%, #9e9cfc 100%);
  box-shadow: 0 0 2px rgba(0,0,0,.4);
}
.bubble { position: absolute; border-radius: 50%; background: rgba(255,255,255,.16); }
.b1 { left: 148px; top: -22px; width: 282px; height: 282px; }
.b2 { right: 42px; top: 347px; width: 150px; height: 150px; background: linear-gradient(rgba(222,145,236,.6), rgba(236,170,190,.35) 50%, rgba(240,225,200,.2)); }
.b3 { right: -5px; top: 68px; width: 124px; height: 124px; background: rgba(185,185,255,.25); }
.scroll { position: absolute; top: 0; right: 0; bottom: 0; width: 15px; background: #fafafa; display: flex; flex-direction: column; align-items: center; gap: 8px; padding-top: 10px; }
.up { border: 5px solid transparent; border-top: 0; border-bottom-color: #8b8b8b; }
.thumb { width: 9px; height: 60px; border-radius: 5px; background: #8b8b8b; }
.filterbar { position: relative; display: flex; justify-content: flex-end; align-items: center; height: 90px; padding-right: 60px; background: #fff; box-shadow: 0 2px 16px rgba(0,0,0,.12); }
.filterbar input { width: 188px; height: 42px; padding: 0 17px; border: 1px solid #d8d8d8; border-radius: 21px; background: linear-gradient(#f3f2f1, #fff); font: 20px "Noto Sans CJK KR", sans-serif; }
.filterbar input::placeholder { color: #858585; }
.songs { position: relative; display: flex; flex-direction: column; gap: 12px; padding: 61px 127px 0 113px; }
.song { display: flex; justify-content: space-between; height: 81px; padding: 14px 17px 0; border-radius: 12px; background: rgba(255,255,255,.92); box-shadow: 0 2px 16px rgba(0,0,0,.14); }
.short { height: 75px; }
.song h2 { font-size: 20px; line-height: 28px; }
.song p { line-height: 28px; }
.meta { text-align: right; color: #6c6c6c; }
.song .meta p { line-height: 26px; }
.levels { display: flex; justify-content: flex-end; gap: 3px; }
.levels > * { width: 30px; height: 30px; border: 1px solid #aeaeae; border-radius: 6px; text-align: center; line-height: 29px; }
.levels b { color: #555; }
.star { height: 25px; line-height: 29px; font-size: 13px; text-align: center; color: #5c7440; }
.menu { position: absolute; left: 0; right: 0; bottom: 0; height: 31px; display: flex; align-items: center; gap: 19px; padding: 0 17px; background: rgba(0,0,0,.7); font-size: 13px; font-weight: 500; }
.menu a { color: #d6d6d6; text-decoration: none; white-space: nowrap; }
.push { margin-left: auto; }
.down { position: absolute; right: 3px; bottom: 10px; border: 5px solid transparent; border-bottom: 0; border-top-color: #2a2a2a; }

/* on-screen keyboard */
.osk { position: absolute; left: 326px; top: 363px; width: 624px; border: 1px solid #1883d7; background: #1b1b1b; color: #fff; box-shadow: 0 4px 20px rgba(0,0,0,.5); }
.osk-title { display: flex; align-items: center; height: 30px; padding-left: 8px; gap: 5px; background: #fff; color: #000; }
.osk-title > svg { width: 16px; height: 10px; }
.osk-title h2 { font-size: 12px; font-weight: 400; }
.osk-title .controls { flex: 1; height: 30px; }
.osk-title button:disabled { color: #c8c8c8; }
.keys { display: flex; padding: 54px 4px 4px; }
.block { display: flex; flex-direction: column; gap: 4px; }
.main { flex: 404; margin-right: 12px; }
.nav { flex: 128; margin-right: 8px; }
.side { flex: 62; }
.row { display: flex; gap: 4px; height: 45px; }
.row:last-child { height: 44px; }
.inset { padding-top: 3px; }
.k { flex: 22 1 0; min-width: 0; padding: 2px 0 0; text-indent: 4px; background: #333; align-items: flex-start; justify-content: flex-start; font-size: 24px; line-height: 26px; white-space: nowrap; }
.k svg { margin-left: 5px; }
.k.on { background: #0078d7; }
.k svg:not([stroke]) { fill: none; stroke: #fff; stroke-width: 1; }
.k.l { font-size: 20px; line-height: 22px; }
.k.m { font-size: 17px; line-height: 21px; }
.k.n { font-size: 17px; line-height: 23px; }
.k.s { font-size: 12px; line-height: 28px; text-indent: 5px; }
.k.fn { font-size: 12px; line-height: 14px; }
.k.xs { font-size: 8px; line-height: 30px; }
.k.low { padding-top: 14px; }
.k.low svg { margin-left: 3px; }
.k.w26 svg { margin-left: 6px; }
.k.two { flex-direction: column; font-size: 12px; line-height: 15px; }
.two i { color: #858585; }
.two b { align-self: flex-end; margin-right: 5px; text-indent: 0; font-weight: 400; }
.w26 { flex-grow: 26; } .w27 { flex-grow: 27; } .w35 { flex-grow: 35; } .w40 { flex-grow: 40; }
.w48 { flex-grow: 48; } .w53 { flex-grow: 53; } .w61 { flex-grow: 61; } .w66 { flex-grow: 66; } .w140 { flex-grow: 140; }

/* input method bar */
.ime { position: absolute; right: 0; bottom: 40px; height: 22px; width: 152px; display: flex; align-items: center; justify-content: space-between; padding: 0 4px; background: #fff; color: #111; font: 15px/22px "Noto Sans CJK SC", sans-serif; }
.grip { width: 2px; height: 20px; background: repeating-linear-gradient(#bbb 0 2px, #fff 2px 4px); }
.box { width: 16px; height: 16px; border: 1px solid #777; text-align: center; font-size: 14px; line-height: 13px; }
.opts { width: 6px; height: 16px; margin-left: 6px; }

/* taskbar */
.taskbar { position: relative; display: flex; justify-content: space-between; height: 40px; background: #00141f; color: #fff; }
.apps, .tray { display: flex; align-items: stretch; }
.apps { gap: 1px; }
.app { position: relative; width: 48px; }
.app:first-child { margin-right: -1px; }
.gap { margin-left: 2px; }
.run::after { content: ""; position: absolute; left: 4px; right: 4px; bottom: 0; height: 2px; background: #76b9ed; }
.active { background: #33434c; }
.active::after { left: 0; right: 0; }
.tray button { width: 32px; }
.tray .wide { width: 40px; }
.tray svg { fill: none; stroke: #fff; stroke-width: 1; }
.tray svg[stroke="none"] { stroke: none; }
.clock { width: 72px; padding-top: 1px; text-align: center; line-height: 19px; }
.tray .notif { width: 49px; }
.edge { width: 1px; margin: 0 4px 0 0; background: #56636b; }
```
